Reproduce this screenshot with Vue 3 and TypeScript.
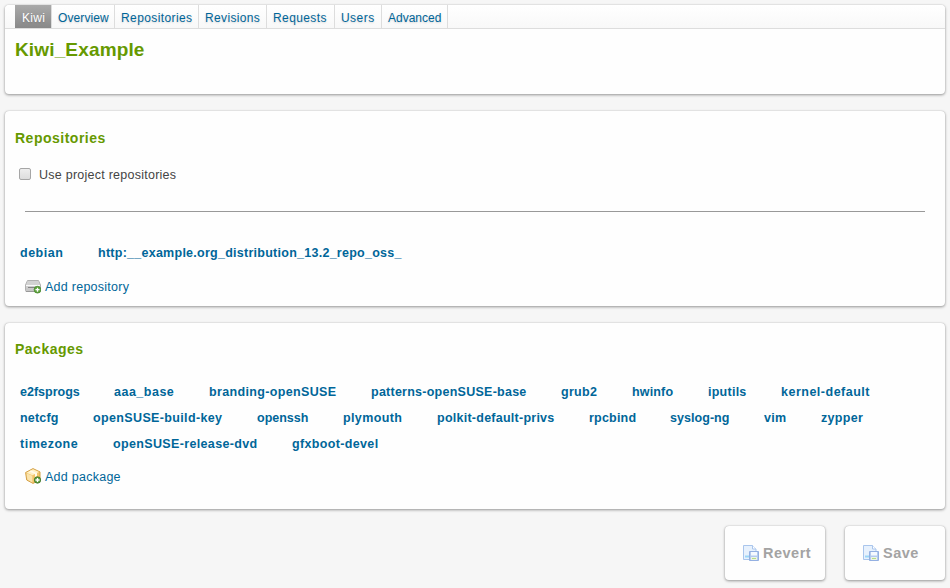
<script setup lang="ts">
interface Item { name: string; width: number; spacing: number }

const tabs: Item[] = [
  { name: 'Kiwi', width: 37, spacing: 0.3 },
  { name: 'Overview', width: 63, spacing: 0.1 },
  { name: 'Repositories', width: 84, spacing: 0.4 },
  { name: 'Revisions', width: 68, spacing: 0.35 },
  { name: 'Requests', width: 68, spacing: 0.4 },
  { name: 'Users', width: 47, spacing: 0.45 },
  { name: 'Advanced', width: 66, spacing: 0 },
]
const repositories: Item[] = [
  { name: 'debian', width: 78, spacing: 0.5 },
  { name: 'http:__example.org_distribution_13.2_repo_oss_', width: 320, spacing: 0.26 },
]
const packageRows: Item[][] = [
  [
    { name: 'e2fsprogs', width: 94, spacing: 0 },
    { name: 'aaa_base', width: 95, spacing: 0.5 },
    { name: 'branding-openSUSE', width: 162, spacing: 0.35 },
    { name: 'patterns-openSUSE-base', width: 190, spacing: 0.25 },
    { name: 'grub2', width: 71, spacing: 0.3 },
    { name: 'hwinfo', width: 76, spacing: 0.15 },
    { name: 'iputils', width: 73, spacing: 0.25 },
    { name: 'kernel-default', width: 110, spacing: 0.5 },
  ],
  [
    { name: 'netcfg', width: 73, spacing: 0.2 },
    { name: 'openSUSE-build-key', width: 164, spacing: 0.36 },
    { name: 'openssh', width: 86, spacing: 0 },
    { name: 'plymouth', width: 94, spacing: 0.38 },
    { name: 'polkit-default-privs', width: 152, spacing: 0.25 },
    { name: 'rpcbind', width: 81, spacing: 0.2 },
    { name: 'syslog-ng', width: 94, spacing: 0.05 },
    { name: 'vim', width: 57, spacing: 0.3 },
    { name: 'zypper', width: 70, spacing: 0.33 },
  ],
  [
    { name: 'timezone', width: 93, spacing: 0.5 },
    { name: 'openSUSE-release-dvd', width: 179, spacing: 0.35 },
    { name: 'gfxboot-devel', width: 110, spacing: 0.35 },
  ],
]
const actions = ['Revert', 'Save']
const sized = (item: Item) => ({ width: item.width + 'px', letterSpacing: item.spacing + 'px' })
</script>

<template>
  <main class="page">
    <section class="panel header">
      <nav class="tabs">
        <a v-for="(tab, i) in tabs" :key="tab.name" class="tab" :class="{ active: i === 0 }" :style="sized(tab)">{{ tab.name }}</a>
      </nav>
      <h1>Kiwi_Example</h1>
    </section>

    <section class="panel repositories">
      <h2>Repositories</h2>
      <label class="option"><input type="checkbox" class="check" /><span>Use project repositories</span></label>
      <hr />
      <div class="row">
        <a v-for="repo in repositories" :key="repo.name" class="entry" :style="sized(repo)">{{ repo.name }}</a>
      </div>
      <a class="add">
        <svg class="icon" viewBox="0 0 16 16">
          <defs>
            <linearGradient id="drive" x1="0" y1="0" x2="0" y2="1"><stop offset="0" stop-color="#dcdcdc" /><stop offset="1" stop-color="#c4c4c4" /></linearGradient>
          </defs>
          <path d="M2.500 1.500h11l2 4.500v5.500q0 1-1 1h-13q-1 0-1-1V6z" fill="url(#drive)" stroke="#b0b0b0" />
          <path d="M3 2h10l1.500 3.500h-13z" fill="#d2d2d2" />
          <path d="M1 6.500h14" stroke="#fafafa" />
          <path d="M3 8.500h9" stroke="#858585" />
          <path d="M1 12.500h10" stroke="#999" />
          <circle cx="12.500" cy="10.700" r="3.400" fill="#5fa33e" stroke="#4c8b32" stroke-width=".8" />
          <path d="M12.500 8.700v4M10.500 10.700h4" stroke="#fff" stroke-width="1.300" />
        </svg>
        <span>Add repository</span>
      </a>
    </section>

    <section class="panel packages">
      <h2>Packages</h2>
      <div class="list">
        <div v-for="(row, i) in packageRows" :key="i" class="row">
          <a v-for="item in row" :key="item.name" class="entry" :style="sized(item)">{{ item.name }}</a>
        </div>
      </div>
      <a class="add">
        <svg class="icon" viewBox="0 0 16 16">
          <path d="M8 .6l7 3.300v8L8 15.400 1.700 12 .6 4.500z" fill="#f2c56a" stroke="#d3a14a" />
          <path d="M8 1.200l6 2.900L7.500 7.200 1.400 4.700z" fill="#fff0c5" />
          <path d="M1.500 5.200L7.300 7.700v6.800L2.300 11.500z" fill="#fae3ac" />
          <path d="M4 3.500L10 6v3l2-1V5L6 2.600z" fill="#fffbed" />
          <circle cx="12.500" cy="12" r="3.200" fill="#5f9e40" stroke="#3d7426" stroke-width=".8" />
          <path d="M12.500 10v4M10.500 12h4" stroke="#fff" stroke-width="1.300" />
        </svg>
        <span>Add package</span>
      </a>
    </section>

    <footer class="actions">
      <button v-for="action in actions" :key="action" type="button" class="panel action">
        <svg class="icon" viewBox="0 0 16 16">
          <path d="M.5.500h9l3.500 3.500v10.500H.5z" fill="#e7f1fd" stroke="#a9c5ec" />
          <path d="M9.500.500v3.500H13" fill="#fff" stroke="#a9c5ec" />
          <path d="M2 11.500h5" stroke="#9bd6f7" stroke-width="2" />
          <path d="M6.500 6.500h9v9h-9z" fill="#b5cbee" stroke="#94b0e2" />
          <path d="M8 7h6v3.500H8z" fill="#f5f9ff" />
          <path d="M8 12h6v3H8z" fill="#edf4e4" />
          <path d="M9 13.500h4" stroke="#b5dc8a" />
        </svg>
        <span>{{ action }}</span>
      </button>
    </footer>
  </main>
</template>

<style>
body { background: #f6f6f6; }
</style>

<style scoped>
.page {
  box-sizing: border-box;
  height: 588px;
  padding: 5px 5px 0;
  display: flex;
  flex-direction: column;
  overflow: hidden;
  font: 12.5px/18px "Liberation Sans", Arial, sans-serif;
  color: #444;
}
.panel {
  box-sizing: border-box;
  flex: none;
  background: #fefefe;
  border: 0;
  border-radius: 4px;
  box-shadow: 0 0 1px #aaa, 0 1px 3px rgba(0, 0, 0, .4);
}
.header { height: 89px; }
.tabs {
  height: 23px;
  padding-left: 10px;
  display: flex;
  background: linear-gradient(#fff, #f8f8f8);
  border-bottom: 1px solid #ddd;
  border-radius: 4px 4px 0 0;
}
.tab {
  box-sizing: border-box;
  padding-left: 6px;
  font-size: 12px;
  line-height: 26px;
  white-space: nowrap;
  color: #069;
  border-right: 1px solid #ddd;
  text-shadow: 0 1px 2px rgba(0, 0, 0, .15);
}
.active { padding-left: 7px; color: #fff; background: linear-gradient(#aaa, #888); }
h1, h2 { margin: 0; color: #690; font-weight: bold; }
h1 { padding: 8px 10px; font-size: 19px; line-height: 26px; letter-spacing: .15px; }
h2 { padding-left: 10px; font-size: 14px; line-height: 20px; letter-spacing: .5px; }
.repositories { height: 195px; margin-top: 17px; padding-top: 17px; }
.option {
  display: flex;
  align-items: center;
  height: 18px;
  margin: 18px 0 0 14px;
  letter-spacing: .25px;
}
.check {
  appearance: none;
  box-sizing: border-box;
  width: 12px;
  height: 12px;
  margin: 0 8px 2px 0;
  border: 1px solid #a6a6a6;
  border-radius: 2px;
  background: linear-gradient(#eee, #ddd);
}
hr { height: 1px; margin: 27px 20px 33px; border: 0; background: #999; }
.row { display: flex; height: 16px; padding-left: 15px; }
.entry { font-weight: bold; line-height: 16px; white-space: nowrap; color: #069; }
.add {
  display: flex;
  width: max-content;
  margin: 17px 0 0 20px;
  gap: 4px;
  align-items: center;
  color: #069;
  letter-spacing: .26px;
}
.icon { flex: none; width: 16px; height: 16px; }
.packages { height: 186px; margin-top: 17px; padding-top: 16px; }
.list { display: grid; gap: 10px; margin-top: 25px; }
.packages .add { margin-top: 16px; }
.packages .icon { margin-bottom: 2px; }
.actions { display: flex; justify-content: flex-end; gap: 20px; margin-top: 17px; }
.action {
  display: flex;
  align-items: center;
  gap: 4px;
  width: 100px;
  height: 54px;
  padding: 0 0 0 18px;
  color: #a3a3a3;
  font: bold 14.5px/20px "Liberation Sans", Arial, sans-serif;
  letter-spacing: .5px;
}
.action .icon { margin-bottom: 1px; }
</style>
